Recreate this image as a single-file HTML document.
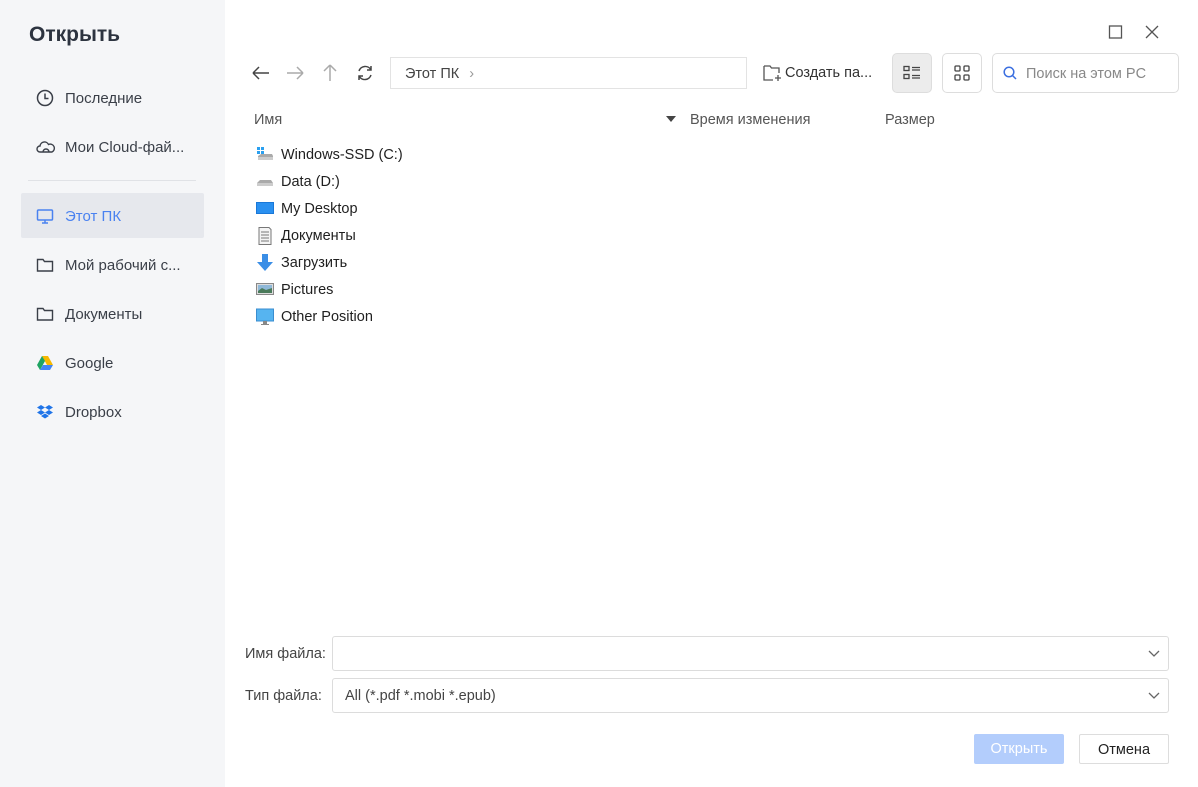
<!DOCTYPE html>
<html><head><meta charset="utf-8"><style>
*{box-sizing:border-box;margin:0;padding:0}
body{width:1198px;height:787px;background:#fff;font-family:"Liberation Sans",sans-serif;position:relative;overflow:hidden;color:#333}
.abs{position:absolute}
.side{left:0;top:0;width:225px;height:787px;background:#f5f6f8}
.title{left:29px;top:23px;font-size:21px;font-weight:bold;color:#2d3440}
.it{position:absolute;left:21px;width:183px;height:45px;font-size:15px;color:#3a3f48;line-height:47px;padding-left:44px}
.it svg{position:absolute;left:15px;top:14px}
.sel{background:#e6e8ed;color:#4a82f0;border-radius:2px}
.row{position:absolute;left:254px;font-size:14.5px;color:#1f1f1f;height:20px;line-height:20px;padding-left:27px}
.row svg{position:absolute;left:2px;top:1px}
.hdr{font-size:14.5px;color:#555;top:112px}
.inp{position:absolute;left:332px;width:837px;height:35px;border:1px solid #dcdcdc;border-radius:3px;font-size:14.5px;line-height:34px;padding-left:12px;color:#444}
.inp svg{position:absolute;right:8px;top:13px}
.lbl{position:absolute;left:245px;font-size:14.5px;color:#444}
.btn{position:absolute;top:734px;height:30px;width:90px;text-align:center;line-height:31px;font-size:14.5px;border-radius:2px}
</style></head><body>
<div class="abs side"></div>
<div class="abs title">Открыть</div>
<div class="it" style="top:75px"><svg width="18" height="18" viewBox="0 0 18 18"><circle cx="9" cy="9" r="7.5" fill="none" stroke="#3a3f48" stroke-width="1.5"/><path d="M9 4.5V9.5H12.5" fill="none" stroke="#3a3f48" stroke-width="1.5"/></svg>Последние</div>
<div class="it" style="top:124px"><svg width="20" height="18" viewBox="0 0 20 18"><path d="M4 14a3 3 0 0 1 0-6 4.5 4.5 0 0 1 8.5-1.5A3.5 3.5 0 0 1 16 14Z M7 14a3 3 0 0 1 6 0" fill="none" stroke="#3a3f48" stroke-width="1.4"/></svg>Мои Cloud-фай...</div>
<div class="abs" style="left:28px;top:180px;width:168px;height:1px;background:#e0e2e6"></div>
<div class="it sel" style="top:193px"><svg width="18" height="18" viewBox="0 0 18 18"><rect x="1.5" y="3" width="15" height="10" rx="1" fill="none" stroke="#4a82f0" stroke-width="1.5"/><path d="M6 16H12M9 13v3" stroke="#4a82f0" stroke-width="1.5"/></svg>Этот ПК</div>
<div class="it" style="top:242px"><svg width="18" height="18" viewBox="0 0 18 18"><path d="M1.5 3.5H7l1.5 2H16.5V15H1.5Z" fill="none" stroke="#3a3f48" stroke-width="1.4"/></svg>Мой рабочий с...</div>
<div class="it" style="top:291px"><svg width="18" height="18" viewBox="0 0 18 18"><path d="M1.5 3.5H7l1.5 2H16.5V15H1.5Z" fill="none" stroke="#3a3f48" stroke-width="1.4"/></svg>Документы</div>
<div class="it" style="top:340px"><svg width="18" height="18" viewBox="0 0 18 18"><path d="M6 2h6l5 9h-6z" fill="#f6b800"/><path d="M6 2l-5 9 3 5 5-9z" fill="#1fa463"/><path d="M4 16h10l3-5H7z" fill="#4285f4"/></svg>Google</div>
<div class="it" style="top:389px"><svg width="18" height="18" viewBox="0 0 18 18" fill="#1f74e8"><path d="M5 2l4 2.5-4 2.5-4-2.5zM13 2l4 2.5-4 2.5-4-2.5zM5 7l4 2.5-4 2.5-4-2.5zM13 7l4 2.5-4 2.5-4-2.5zM5 13l4-2.5 4 2.5-4 2.5z"/></svg>Dropbox</div>

<svg class="abs" style="left:1108px;top:25px" width="56" height="14" viewBox="0 0 56 14"><rect x="1.5" y="1" width="12" height="12" fill="none" stroke="#555" stroke-width="1.3"/><path d="M38 1l12 12M50 1L38 13" stroke="#555" stroke-width="1.3"/></svg>
<svg class="abs" style="left:250px;top:63px" width="130" height="20" viewBox="0 0 130 20"><path d="M3 10H19M3 10l6-6M3 10l6 6" fill="none" stroke="#444" stroke-width="1.5"/><path d="M37 10H53M53 10l-6-6M53 10l-6 6" fill="none" stroke="#aaa" stroke-width="1.5"/><path d="M80 2V18M80 2l-6 6M80 2l6 6" fill="none" stroke="#aaa" stroke-width="1.5"/><path d="M121 7a6.5 6.5 0 0 0-12 1M109 13a6.5 6.5 0 0 0 12-1M121 3v4h-4M109 17v-4h4" fill="none" stroke="#444" stroke-width="1.5"/></svg>
<div class="abs" style="left:390px;top:57px;width:357px;height:32px;border:1px solid #e3e3e3;font-size:14.5px;color:#444;line-height:33px;padding-left:14px">Этот ПК <span style="color:#999;margin-left:6px">&#8250;</span></div>
<svg class="abs" style="left:763px;top:64px" width="20" height="18" viewBox="0 0 20 18"><path d="M1 2H7l1.5 2H16V9M10 16H1V2" fill="none" stroke="#555" stroke-width="1.3"/><path d="M15 11v6M12 14h6" stroke="#555" stroke-width="1.3"/></svg>
<div class="abs" style="left:785px;top:65px;font-size:14.5px;color:#333">Создать па...</div>
<div class="abs" style="left:892px;top:53px;width:40px;height:40px;background:#ececec;border:1px solid #ddd;border-radius:5px"></div>
<svg class="abs" style="left:903px;top:65px" width="18" height="16" viewBox="0 0 18 16" fill="none" stroke="#444" stroke-width="1.3"><rect x="1" y="1.5" width="5" height="4"/><rect x="1" y="9.5" width="5" height="4"/><path d="M9 2.5h8M9 5h8M9 10.5h8M9 13h8"/></svg>
<div class="abs" style="left:942px;top:53px;width:40px;height:40px;border:1px solid #ddd;border-radius:5px"></div>
<svg class="abs" style="left:954px;top:65px" width="16" height="16" viewBox="0 0 16 16" fill="none" stroke="#444" stroke-width="1.3"><rect x="1" y="1" width="5" height="5" rx="1"/><rect x="10" y="1" width="5" height="5" rx="1"/><rect x="1" y="10" width="5" height="5" rx="1"/><rect x="10" y="10" width="5" height="5" rx="1"/></svg>
<div class="abs" style="left:992px;top:53px;width:187px;height:40px;border:1px solid #ddd;border-radius:5px;font-size:14.5px;color:#888;line-height:41px;padding-left:33px">Поиск на этом PC</div>
<svg class="abs" style="left:1003px;top:66px" width="14" height="14" viewBox="0 0 14 14"><circle cx="6" cy="6" r="4.8" fill="none" stroke="#3b6fe0" stroke-width="1.5"/><path d="M9.5 9.5L13 13" stroke="#3b6fe0" stroke-width="1.5"/></svg>

<div class="abs hdr" style="left:254px">Имя</div>
<svg class="abs" style="left:666px;top:116px" width="10" height="6"><path d="M0 0h10L5 6z" fill="#444"/></svg>
<div class="abs hdr" style="left:690px">Время изменения</div>
<div class="abs hdr" style="left:885px">Размер</div>

<div class="row" style="top:145px"><svg width="18" height="16" viewBox="0 0 18 16"><rect x="1" y="1" width="3" height="3" fill="#2aa0f0"/><rect x="5" y="1" width="3" height="3" fill="#2aa0f0"/><rect x="1" y="5" width="3" height="3" fill="#2aa0f0"/><rect x="5" y="5" width="3" height="3" fill="#2aa0f0"/><path d="M2 10l3-2h11l1 2v3H2z" fill="#aaa"/><rect x="2" y="11" width="15" height="3" fill="#ccc"/></svg>Windows-SSD (C:)</div>
<div class="row" style="top:172px"><svg width="18" height="16" viewBox="0 0 18 16"><path d="M1 10l3-3h11l2 3v3H1z" fill="#aaa"/><rect x="1" y="10" width="16" height="3" fill="#ccc"/></svg>Data (D:)</div>
<div class="row" style="top:199px"><svg width="18" height="16" viewBox="0 0 18 16"><rect x="0" y="2" width="18" height="12" fill="#1a78d8"/><rect x="1" y="3" width="16" height="10" fill="#2a90f0"/></svg>My Desktop</div>
<div class="row" style="top:226px"><svg width="18" height="18" viewBox="0 0 18 18"><path d="M3 0.5H13l2 2V17.5H3z" fill="#f4f4f4" stroke="#777"/><path d="M5 5h8M5 8h8M5 11h8M5 14h8" stroke="#777"/></svg>Документы</div>
<div class="row" style="top:253px"><svg width="18" height="18" viewBox="0 0 18 18"><path d="M6 0h6v8h5l-8 9-8-9h5z" fill="#3a8ee6"/></svg>Загрузить</div>
<div class="row" style="top:280px"><svg width="18" height="16" viewBox="0 0 18 16"><rect x="0.5" y="2.5" width="17" height="11" fill="#ddd" stroke="#888"/><rect x="2" y="4" width="14" height="8" fill="#8fb8d8"/><path d="M2 10l4-3 4 2 6-2v5H2z" fill="#4a7a5a"/></svg>Pictures</div>
<div class="row" style="top:307px"><svg width="18" height="18" viewBox="0 0 18 18"><rect x="0.5" y="1" width="17" height="12" fill="#56b4f0" stroke="#3a8ed0"/><path d="M7 13v3H5v1h8v-1h-2v-3z" fill="#888"/></svg>Other Position</div>

<div class="lbl" style="top:646px">Имя файла:</div>
<div class="inp" style="top:636px"><svg width="12" height="8"><path d="M1 1l5 5 5-5" fill="none" stroke="#666" stroke-width="1.3"/></svg></div>
<div class="lbl" style="top:688px">Тип файла:</div>
<div class="inp" style="top:678px">All (*.pdf *.mobi *.epub)<svg width="12" height="8"><path d="M1 1l5 5 5-5" fill="none" stroke="#666" stroke-width="1.3"/></svg></div>
<div class="btn" style="left:974px;background:#b3cdfc;color:#fff">Открыть</div>
<div class="btn" style="left:1079px;border:1px solid #ddd;color:#222">Отмена</div>
</body></html>
